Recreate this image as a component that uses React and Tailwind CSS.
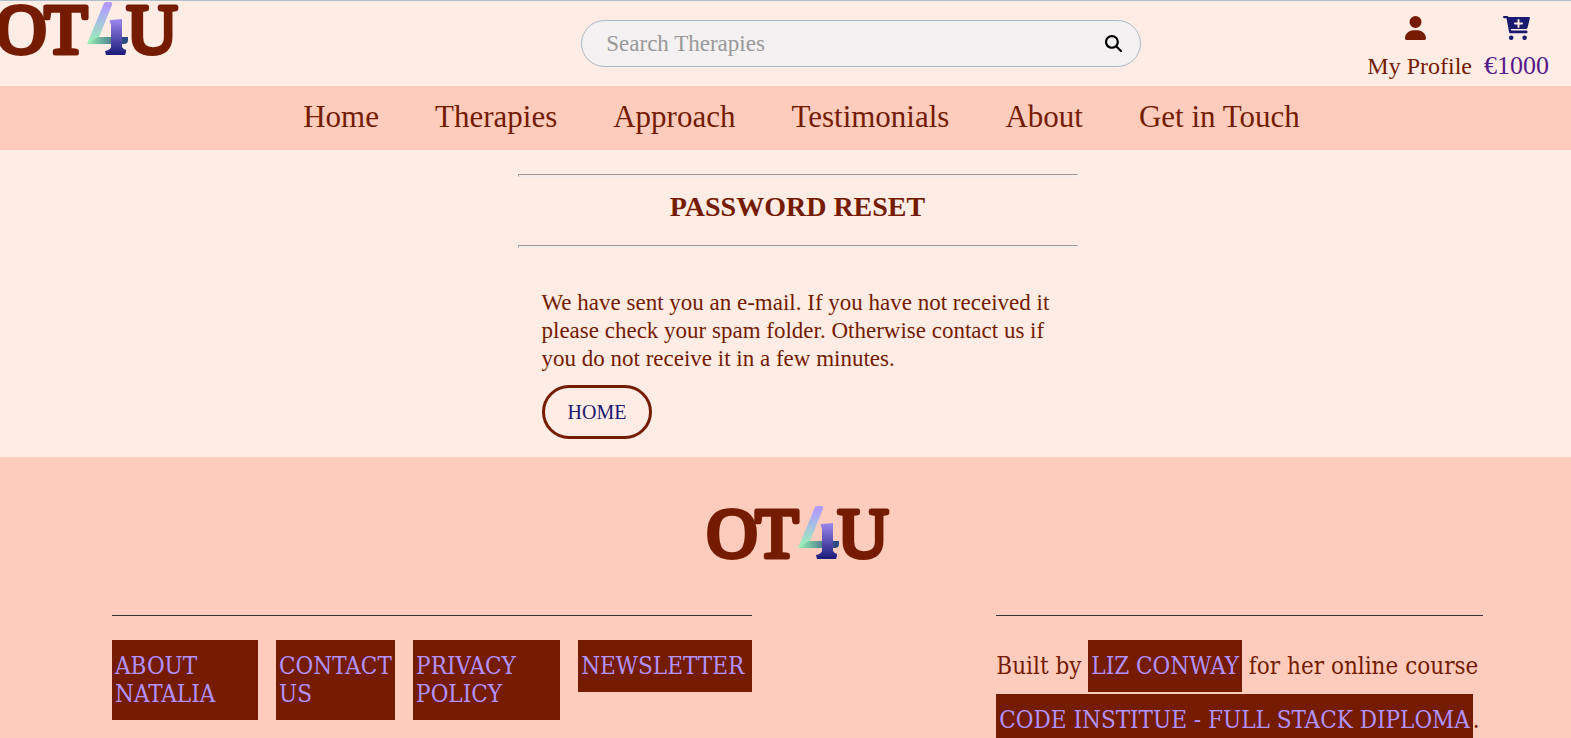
import React, { useId } from "react";
import { FaMagnifyingGlass, FaUser } from "react-icons/fa6";

const navLinks = ["Home", "Therapies", "Approach", "Testimonials", "About", "Get in Touch"];
const footerLinks = ["About Natalia", "Contact Us", "Privacy Policy", "Newsletter"];

function CartPlus() {
  return (
    <svg viewBox="0 0 27 24" className="h-6 w-[27px]" fill="#191970" aria-hidden="true">
      <path d="M1 0H4.2Q5.2 0 5.5 1H26Q27.2 1 26.9 2.2L24.6 11.5Q24.2 13 22.7 13H7.9L8.2 14.6H23.6Q24.5 14.8 24.5 15.9 24.5 17.2 23.6 17.2H7.2Q6.3 17.2 6.1 16.3L3.5 2.2H1Q0 2.1 0 1.1 0 0 1 0Z" />
      <circle cx="8.2" cy="21.7" r="2.3" />
      <circle cx="21.6" cy="21.7" r="2.3" />
      <path d="M15.5 4V11M12 7.5H19" stroke="#ffece4" strokeWidth="2" strokeLinecap="round" />
    </svg>
  );
}

function Logo() {
  const id = useId();
  return (
    <svg viewBox="0 0 180 56" className="block h-14 w-45 overflow-visible" role="img" aria-label="OT4U">
      <defs>
        <linearGradient id={`${id}a`} x1="0" y1="0" x2="0" y2="1">
          <stop offset="0.1" stopColor="#b19cff" />
          <stop offset="1" stopColor="#98f5b4" />
        </linearGradient>
        <linearGradient id={`${id}b`} x1="0" y1="0" x2="1" y2="0">
          <stop offset="0" stopColor="#98f5b4" />
          <stop offset="0.9" stopColor="#2b4a80" />
        </linearGradient>
        <linearGradient id={`${id}c`} x1="0" y1="0" x2="0" y2="1">
          <stop offset="0" stopColor="#9d88ee" />
          <stop offset="1" stopColor="#1b1b78" />
        </linearGradient>
      </defs>
      <g
        className="font-['Liberation_Serif',serif]"
        fontSize="70"
        fill="#741b00"
        stroke="#741b00"
        strokeWidth="5"
        strokeLinejoin="round"
        textAnchor="middle"
      >
        <text x="24" y="52">O</text>
        <text x="69" y="52">T</text>
        <text x="155" y="52">U</text>
      </g>
      <path d="M107 2Q108 1 110 1H114Q116 2 115 4L102 36L90 43Z" fill={`url(#${id}a)`} />
      <path d="M90 43L101 36H131V39Q131 43 127 43Z" fill={`url(#${id}b)`} />
      <path
        d="M113 21Q112 19 114 19L125 18V46Q126 48 129 49V51L128 54H109L108 50Q113 49 114 46V24Z"
        fill={`url(#${id}c)`}
      />
    </svg>
  );
}

function Rule() {
  return <hr className="h-[3px] border border-t-[#999999] border-r-[#eeeeee] border-b-[#eeeeee] border-l-[#999999]" />;
}

function Highlight({ children }) {
  return (
    <a href="#" className="inline-block bg-[#741b00] px-[3px] py-3 leading-7 whitespace-nowrap text-[#b292ff] uppercase">
      {children}
    </a>
  );
}

export default function App() {
  return (
    <div className="min-h-screen overflow-x-hidden bg-[#ffece4] font-['Liberation_Serif',serif] text-[#741b00]">
      <header className="grid h-[86px] grid-cols-[37%_35.6%_1fr] border-t border-[#b0bfcc]">
        <a href="#" className="-ml-[3px] justify-self-start">
          <Logo />
        </a>
        <form className="mt-[19px] flex h-[47px] items-center rounded-full border border-[#a9b9c9] bg-[#f3f1f2] px-6">
          <input
            type="search"
            aria-label="Search Therapies"
            placeholder="Search Therapies"
            className="min-w-0 flex-1 bg-transparent text-[23px] leading-7 outline-none placeholder:text-[#999999]"
          />
          <button type="button" aria-label="Search" className="-mr-1.5 text-black">
            <FaMagnifyingGlass className="size-[17px]" />
          </button>
        </form>
        <div className="flex items-start justify-end gap-3 pt-[15px] pr-[22px]">
          <a href="#" className="flex flex-col items-center gap-3 text-2xl leading-7">
            <FaUser className="mr-2 h-6 w-[21px]" />
            My Profile
          </a>
          <a href="#" className="flex flex-col items-center gap-3 text-[26px] leading-7 text-[#551a8b]">
            <CartPlus />
            €1000
          </a>
        </div>
      </header>

      <nav className="flex h-16 items-center justify-center gap-14 bg-[#feccbd] pb-0.5 pl-8 text-[31px] leading-9 whitespace-nowrap">
        {navLinks.map((label) => (
          <a key={label} href="#">
            {label}
          </a>
        ))}
      </nav>

      <main className="flex justify-center pt-6 pb-[18px] pl-6">
        <div className="w-[36.2%]">
          <Rule />
          <h1 className="pt-3 pb-5 text-center text-[28px] leading-9 font-bold">PASSWORD RESET</h1>
          <Rule />
          <div className="px-6 pt-[41px]">
            <p className="text-[23px] leading-7">
              We have sent you an e-mail. If you have not received it please check your spam folder. Otherwise
              contact us if you do not receive it in a few minutes.
            </p>
            <a
              href="#"
              className="mt-3 inline-flex h-[54px] items-center rounded-full border-3 border-[#741b00] px-[23px] text-xl text-[#191970]"
            >
              HOME
            </a>
          </div>
        </div>
      </main>

      <footer className="bg-[#feccbd] pt-12 font-['DejaVu_Serif_Condensed','DejaVu_Serif',serif] text-2xl">
        <div className="flex justify-center pl-6">
          <Logo />
        </div>
        <div className="mt-[54px] flex justify-between pr-[88px] pl-28">
          <section className="w-[46.7%]">
            <hr className="border-[#333333]" />
            <ul className="mt-6 grid grid-cols-[146fr_119fr_147fr_174fr] items-start gap-[18px]">
              {footerLinks.map((label) => (
                <li key={label}>
                  <a href="#" className="block bg-[#741b00] px-[3px] py-3 leading-7 text-[#b292ff] uppercase">
                    {label}
                  </a>
                </li>
              ))}
            </ul>
          </section>
          <section className="w-[35.5%]">
            <hr className="border-[#333333]" />
            <p className="mt-6 flex flex-col items-start gap-0.5 whitespace-nowrap">
              <span>
                Built by <Highlight>Liz Conway</Highlight> for her online course
              </span>
              <span>
                <Highlight>Code Institue - Full Stack Diploma</Highlight>.
              </span>
            </p>
          </section>
        </div>
      </footer>
    </div>
  );
}
